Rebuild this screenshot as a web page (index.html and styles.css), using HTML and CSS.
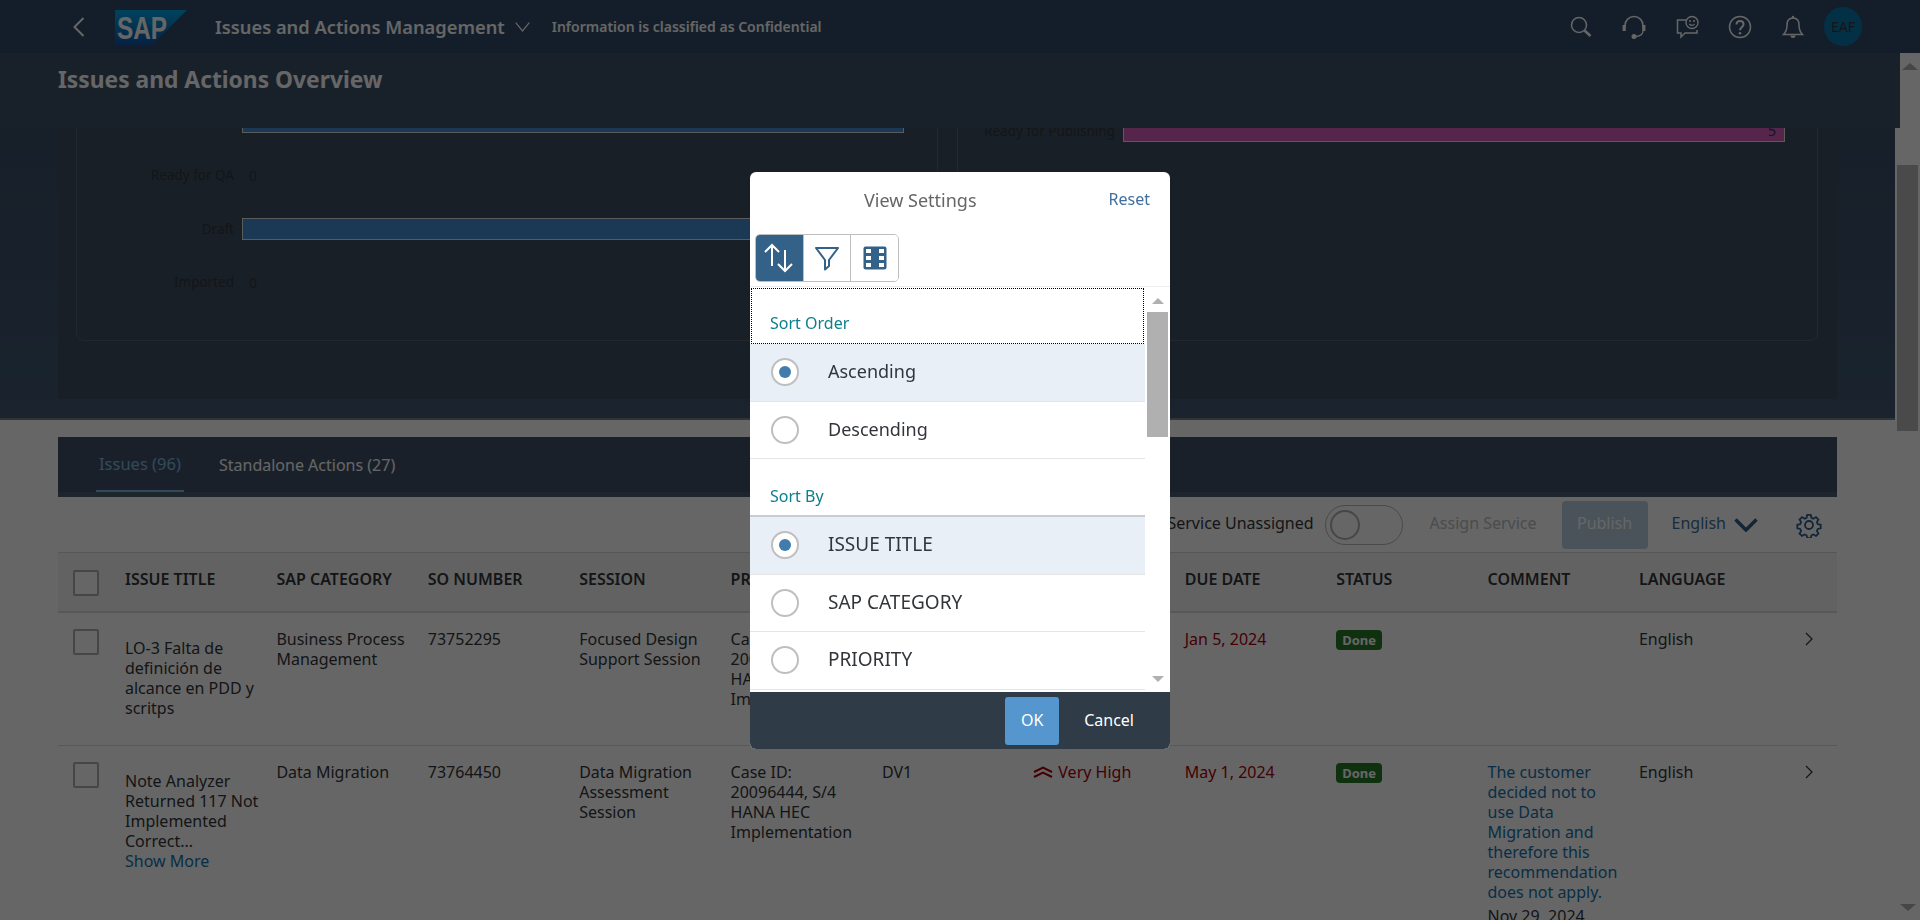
FILE: index.html
```html
<!DOCTYPE html>
<html lang="en">
<head>
<meta charset="utf-8">
<title>Issues and Actions Overview</title>
<link rel="stylesheet" href="styles.css">
</head>
<body>
<div class="app">
  <header class="shell">
    <svg class="ic-back" viewBox="0 0 14 20" width="14" height="20"><path d="M11.5 1 2.5 10l9 9" fill="none" stroke="#fff" stroke-width="2"/></svg>
    <svg class="logo" viewBox="0 0 72 36" width="72" height="36">
      <defs><linearGradient id="sapg" x1="0" y1="0" x2="0" y2="1"><stop offset="0" stop-color="#00a8e8"/><stop offset="1" stop-color="#1150a8"/></linearGradient></defs>
      <polygon points="0,0 72,0 36,36 0,36" fill="url(#sapg)"/>
      <text x="2" y="29" class="logo-text" textLength="50" lengthAdjust="spacingAndGlyphs">SAP</text>
    </svg>
    <span class="app-title">Issues and Actions Management</span>
    <svg class="ic-caret" viewBox="0 0 15 10" width="15" height="10"><path d="M.7.7 7.500 9l6.800-8.300" fill="none" stroke="#fff" stroke-width="1.200"/></svg>
    <span class="classified">Information is classified as Confidential</span>
    <div class="shell-actions">
      <svg viewBox="0 0 24 24" width="24" height="24"><circle cx="10" cy="10" r="7.500" fill="none" stroke="#fff" stroke-width="1.500"/><path d="M15.500 15.500 21.500 21" stroke="#fff" stroke-width="2.600"/></svg>
      <svg viewBox="0 0 24 24" width="24" height="24"><path d="M3 12V10.500a9 9 0 0 1 18 0V12" fill="none" stroke="#fff" stroke-width="1.500"/><path d="M2.200 10v6M21.800 10v6" stroke="#fff" stroke-width="3.200"/><path d="M21 16c0 3-2.500 5-7 5.500" fill="none" stroke="#fff" stroke-width="1.300"/><circle cx="12" cy="21.500" r="2.500" fill="#fff"/></svg>
      <svg viewBox="0 0 24 24" width="24" height="24"><path d="M11 5H2.500v13h3.500v4l4-4h12v-3" fill="none" stroke="#fff" stroke-width="1.500"/><circle cx="17" cy="7.500" r="6" fill="none" stroke="#fff" stroke-width="1.400"/><circle cx="15" cy="6" r="1" fill="#fff"/><circle cx="19" cy="6" r="1" fill="#fff"/><path d="M14.300 9c1.500 1.800 4 1.800 5.400 0" fill="none" stroke="#fff" stroke-width="1.200"/></svg>
      <svg viewBox="0 0 24 24" width="24" height="24"><circle cx="12" cy="12" r="10.500" fill="none" stroke="#fff" stroke-width="1.500"/><path d="M8.500 9.500C8.500 7 10 6 12 6s3.500 1.200 3.500 3.200c0 3-3.500 3-3.500 6" fill="none" stroke="#fff" stroke-width="2"/><circle cx="12" cy="18.300" r="1.300" fill="#fff"/></svg>
      <svg viewBox="0 0 24 24" width="24" height="24"><path d="M12 3c-4 0-6 3-6 7 0 5-1 7-3.500 9.500h19C19 17 18 15 18 10c0-4-2-7-6-7Z" fill="none" stroke="#fff" stroke-width="1.500"/><circle cx="12" cy="2" r="1.200" fill="#fff"/><path d="M9.500 20.500a2.500 2.500 0 0 0 5 0Z" fill="#fff"/></svg>
      <span class="avatar">EAF</span>
    </div>
  </header>
  <div class="workspace">
    <main class="main">
      <div class="title-bar"><h1 class="page-title">Issues and Actions Overview</h1></div>
      <section class="band">
        <div class="panel">
          <div class="card">
            <div class="chart-row"><span class="chart-label">In Review</span><div class="bar bar-blue bar-full"></div></div>
            <div class="chart-row"><span class="chart-label">Ready for QA</span><span class="chart-zero">0</span></div>
            <div class="chart-row"><span class="chart-label">Draft</span><div class="bar bar-blue bar-draft"></div></div>
            <div class="chart-row"><span class="chart-label">Imported</span><span class="chart-zero">0</span></div>
          </div>
          <div class="card card-right">
            <div class="chart-row"><span class="chart-label">Ready for Publishing</span><div class="bar bar-pink bar-full"><span class="bar-value">5</span></div></div>
          </div>
        </div>
      </section>
      <section class="issues">
        <nav class="tabs">
          <span class="tab tab-active">Issues (96)</span>
          <span class="tab">Standalone Actions (27)</span>
        </nav>
        <div class="toolbar">
          <span class="tool-text">Service Unassigned</span>
          <span class="toggle"><span class="knob"></span></span>
          <span class="assign">Assign Service</span>
          <span class="publish">Publish</span>
          <span class="lang">English</span>
          <svg class="lang-caret" viewBox="0 0 24 14" width="24" height="14"><path d="M1.500 1.500 12 12 22.500 1.500" fill="none" stroke="#2f5f8a" stroke-width="3.500"/></svg>
          <svg class="gear" viewBox="0 0 26 26" width="26" height="26"><circle cx="13" cy="13" r="4" fill="none" stroke="#2f5f8a" stroke-width="1.800"/><path d="M11 1.500h4l.7 3.300 2.300 1 2.900-1.800 2.800 2.800-1.800 2.900 1 2.300 3.300.7v4l-3.300.7-1 2.300 1.800 2.900-2.800 2.800-2.900-1.800-2.300 1-.7 3.300h-4l-.7-3.300-2.300-1-2.900 1.800-2.800-2.800 1.800-2.900-1-2.300-3.300-.7v-4l3.300-.7 1-2.300-1.800-2.900 2.800-2.800 2.900 1.800 2.300-1Z" transform="translate(1.500 1.500) scale(.885)" fill="none" stroke="#2f5f8a" stroke-width="2"/></svg>
        </div>
        <div class="grid grid-head">
          <span class="check-cell"><span class="check"></span></span>
          <span class="cell">ISSUE TITLE</span>
          <span class="cell">SAP CATEGORY</span>
          <span class="cell">SO NUMBER</span>
          <span class="cell">SESSION</span>
          <span class="cell">PROJECT</span>
          <span class="cell">PHASE</span>
          <span class="cell">PRIORITY</span>
          <span class="cell">DUE DATE</span>
          <span class="cell">STATUS</span>
          <span class="cell">COMMENT</span>
          <span class="cell">LANGUAGE</span>
        </div>
        <div class="grid grid-row row-one">
          <span class="check-cell"><span class="check"></span></span>
          <span class="cell cell-title">LO-3 Falta de definición de alcance en PDD y scritps</span>
          <span class="cell">Business Process Management</span>
          <span class="cell">73752295</span>
          <span class="cell">Focused Design Support Session</span>
          <span class="cell">Case ID: 20096444, S/4 HANA HEC Implementation</span>
          <span class="cell">DV1</span>
          <span class="cell prio"></span>
          <span class="cell due">Jan 5, 2024</span>
          <span class="cell"><span class="badge">Done</span></span>
          <span class="cell"></span>
          <span class="cell">English</span>
          <svg class="row-nav" viewBox="0 0 8 14" width="8" height="14"><path d="m1 1 6 6-6 6" fill="none" stroke="#333" stroke-width="1.200"/></svg>
        </div>
        <div class="grid grid-row">
          <span class="check-cell"><span class="check"></span></span>
          <span class="cell cell-title">Note Analyzer Returned 117 Not Implemented Correct...<a class="more">Show More</a></span>
          <span class="cell">Data Migration</span>
          <span class="cell">73764450</span>
          <span class="cell">Data Migration Assessment Session</span>
          <span class="cell">Case ID: 20096444, S/4 HANA HEC Implementation</span>
          <span class="cell">DV1</span>
          <span class="cell prio"><svg viewBox="0 0 20 12" width="20" height="12"><path d="M1 6 10 1.500 19 6M1 11 10 6.500 19 11" fill="none" stroke="#a80008" stroke-width="2"/></svg>Very High</span>
          <span class="cell due">May 1, 2024</span>
          <span class="cell"><span class="badge">Done</span></span>
          <span class="cell comment">The customer decided not to use Data Migration and therefore this recommendation does not apply.<span class="comment-date">Nov 29, 2024</span></span>
          <span class="cell">English</span>
          <svg class="row-nav" viewBox="0 0 8 14" width="8" height="14"><path d="m1 1 6 6-6 6" fill="none" stroke="#333" stroke-width="1.200"/></svg>
        </div>
      </section>
    </main>
    <div class="page-scroll">
      <span class="arrow-up"></span>
      <span class="page-thumb"></span>
      <span class="arrow-down"></span>
    </div>
  </div>
</div>

<div class="overlay"></div>

<div class="dialog" role="dialog">
  <div class="dlg-head">
    <span class="dlg-title">View Settings</span>
    <a class="reset">Reset</a>
  </div>
  <div class="seg-row">
    <div class="seg">
      <span class="seg-btn seg-on"><svg viewBox="0 0 32 32" width="32" height="32"><path d="M9 24V3M2 10l7-7 7 7M22 8v21M15 22l7 7 7-7" fill="none" stroke="#fff" stroke-width="2"/></svg></span>
      <span class="seg-btn"><svg viewBox="0 0 26 26" width="26" height="26"><path d="M2 3h22l-9 12v6l-4 3.500V15Z" fill="none" stroke="#346187" stroke-width="2" stroke-linejoin="round"/></svg></span>
      <span class="seg-btn"><svg viewBox="0 0 24 24" width="24" height="24"><rect x=".5" y=".5" width="23" height="23" rx="2" fill="#346187"/><path d="M3 3h5v4H3zM3 10h5v4H3zM3 17h5v4H3zM16 3h5v4h-5zM16 10h5v4h-5zM16 17h5v4h-5z" fill="#fff"/></svg></span>
    </div>
  </div>
  <div class="dlg-scroll">
    <div class="dlg-list">
      <div class="group group-focus">Sort Order</div>
      <div class="opt opt-on"><span class="radio"></span><span class="opt-text">Ascending</span></div>
      <div class="opt"><span class="radio"></span><span class="opt-text">Descending</span></div>
      <div class="group group-line">Sort By</div>
      <div class="opt opt-on"><span class="radio"></span><span class="opt-text opt-caps">ISSUE TITLE</span></div>
      <div class="opt"><span class="radio"></span><span class="opt-text opt-caps">SAP CATEGORY</span></div>
      <div class="opt"><span class="radio"></span><span class="opt-text opt-caps">PRIORITY</span></div>
    </div>
    <div class="dlg-bar">
      <span class="dlg-up"></span>
      <span class="dlg-thumb"></span>
      <span class="dlg-down"></span>
    </div>
  </div>
  <div class="dlg-foot">
    <span class="btn-ok">OK</span>
    <span class="btn-cancel">Cancel</span>
  </div>
</div>
</body>
</html>
```

FILE: styles.css
```css
* { box-sizing: border-box; }
html, body { margin: 0; height: 920px; overflow: hidden; background: #fff; }
body { font-family: "Noto Sans", "Open Sans", sans-serif; color: #32363a; font-size: 16px; }

.app { height: 920px; display: flex; flex-direction: column; overflow: hidden; }

/* shell */
.shell { height: 53px; flex: none; background: #324b69; display: flex; align-items: center; color: #fff; position: relative; z-index: 2; }
.ic-back { margin-left: 72px; }
.logo { margin: 3px 0 0 29px; flex: none; }
.logo-text { font-family: "Liberation Sans", sans-serif; font-weight: 700; font-size: 31px; fill: #fff; }
.app-title { margin-left: 28px; font-size: 18.300px; font-weight: 600; white-space: nowrap; }
.ic-caret { margin-left: 10px; }
.classified { margin-left: 22px; font-size: 14px; font-weight: 600; white-space: nowrap; }
.shell-actions { margin-left: auto; margin-right: 58px; display: flex; align-items: center; gap: 29px; }
.avatar { width: 38px; height: 39px; border-radius: 50%; background: #0a78ac; color: #32363a; font-size: 14px; display: flex; align-items: center; justify-content: center; margin-left: -10px; }

/* workspace */
.workspace { flex: 1; display: flex; min-height: 0; }
.main { width: 1895px; flex: none; }
.page-scroll { width: 25px; flex: none; display: flex; flex-direction: column; align-items: center; background: #fff; padding: 10px 0 9px 0; }
.arrow-up { width: 0; height: 0; border-left: 8px solid transparent; border-right: 8px solid transparent; border-bottom: 7px solid #b0b0b0; margin-left: 5px; }
.page-thumb { width: 21px; height: 266px; background: #b8b8b8; margin-top: 95px; }
.arrow-down { margin-top: auto; width: 0; height: 0; border-left: 8px solid transparent; border-right: 8px solid transparent; border-top: 7px solid #b0b0b0; }

.title-bar { height: 75px; margin-right: -5px; position: relative; background: #3e5269; display: flex; align-items: center; padding: 0 0 21px 58px; z-index: 1; }
.page-title { margin: 0; color: #fff; font-size: 22.800px; font-weight: 700; line-height: 1; }

.band { height: 292px; padding: 0 58px; background: linear-gradient(#3a4e68, #425a72); border-bottom: 2px solid #7a7f88; }
.panel { height: 271px; background: #3e4e62; padding: 0 19px 0 18px; display: grid; grid-template-columns: 862px 861px; column-gap: 19px; overflow: hidden; align-items: start; }
.card { height: 246px; margin-top: -33px; border: 1px solid #5a6473; border-top: 0; border-radius: 0 0 8px 8px; }
.card-right { padding-top: 9px; }
.chart-row { height: 53.500px; display: flex; align-items: center; gap: 8px; }
.chart-label { width: 157px; text-align: right; font-size: 13.500px; white-space: nowrap; flex: none; }
.chart-zero { font-size: 14px; margin-left: 7px; }
.bar { height: 22px; border: 1px solid #e4e4e4; position: relative; }
.bar-full { width: 662px; }
.bar-draft { width: 520px; }
.bar-blue { background: #448cd4; border-width: 1.500px; }
.bar-pink { background: #d55cbc; display: flex; align-items: center; justify-content: flex-end; padding-right: 8px; font-size: 14px; }

/* issues */
.issues { margin: 17px 58px 0; }
.tabs { height: 60px; background: linear-gradient(#415269 55px, #46606f 55px); display: flex; gap: 32px; padding: 0 38px 5px; color: #fff; font-size: 16px; }
.tab { display: flex; align-items: center; height: 55px; padding: 0 3px; position: relative; }
.tab-active { color: #7eb8e0; border-bottom: 2px solid #7eb8e0; width: 88px; flex: none; font-size: 16.500px; white-space: nowrap; }
.toolbar { height: 56px; display: flex; align-items: center; border-bottom: 1px solid #d9d9d9; padding-right: 15px; }
.tool-text { margin-left: auto; font-size: 16px; white-space: nowrap; padding-bottom: 3px; }
.toggle { width: 78px; height: 40px; margin-left: 11px; border: 1px solid #b8b8b8; border-radius: 20px; padding: 4px 4px; display: flex; }
.knob { width: 30px; height: 30px; border-radius: 50%; border: 2px solid #b0b0b0; background: #fff; }
.assign { margin-left: 27px; color: #b8bec4; font-size: 16px; white-space: nowrap; padding-bottom: 3px; }
.publish { margin-left: 25px; width: 86px; height: 48px; border-radius: 4px; background: #b9cfe0; color: #fff; display: flex; align-items: center; justify-content: center; font-size: 16px; padding-bottom: 3px; }
.lang { margin-left: 24px; color: #3d6f9a; font-size: 16px; padding-bottom: 3px; }
.lang-caret { margin-left: 8px; }
.gear { margin-left: 38px; }

.grid { display: grid; grid-template-columns: 59px repeat(11, 151.400px) 1fr; position: relative; }
.grid-head { height: 60px; background: #f6f6f6; border-bottom: 2px solid #dcdcdc; font-weight: 600; font-size: 16px; align-items: start; padding-top: 16px; color: #32363a; }
.grid-row { border-bottom: 1px solid #dcdcdc; padding-top: 16px; line-height: 20px; font-size: 16px; align-items: start; }
.row-one { height: 133px; }
.cell { padding-left: 8px; padding-right: 8px; display: block; }
.grid-head .cell { line-height: 20px; white-space: nowrap; overflow: hidden; }
.check-cell { display: block; padding: 0 0 0 15px; }
.grid-head .check-cell { padding-top: 1px; }
.check { display: block; width: 26px; height: 26px; border: 2px solid #b0b0b0; border-radius: 2px; background: #fff; }
.cell-title { padding-top: 9px; padding-right: 4px; }
.more { display: block; color: #1574b0; }
.prio { color: #a80008; display: flex; align-items: center; gap: 5px; white-space: nowrap; }
.due { color: #ad0008; }
.badge { display: inline-block; width: 46px; height: 20px; line-height: 20px; text-align: center; border-radius: 4px; background: #2a7b2a; color: #fff; font-size: 13px; font-weight: 700; vertical-align: top; margin-top: 1px; }
.comment { color: #1574b0; padding-right: 16px; }
.comment-date { display: block; margin-top: 4px; color: #32363a; }
.row-nav { position: absolute; left: 1747px; top: 19px; }

/* overlay */
.overlay { position: fixed; inset: 0; background: rgba(0, 0, 0, .6); z-index: 10; }

/* dialog */
.dialog { position: fixed; left: 750px; top: 172px; width: 420px; height: 577px; background: #fff; border-radius: 6px; z-index: 11; display: flex; flex-direction: column; overflow: hidden; }
.dlg-head { height: 56px; flex: none; display: flex; align-items: center; padding: 0 20px 0 114px; }
.dlg-title { font-size: 18px; color: #666; }
.reset { margin-left: auto; color: #3f6f9f; font-size: 16px; margin-top: -2px; }
.seg-row { height: 59px; flex: none; padding: 6px 5px 0; border-bottom: 1px solid #ededed; }
.seg { display: flex; width: 144px; height: 48px; border: 1px solid #bfbfbf; border-radius: 5px; overflow: hidden; }
.seg-btn { flex: 1; display: flex; align-items: center; justify-content: center; background: #fff; border-left: 1px solid #bfbfbf; }
.seg-btn:first-child { border-left: 0; }
.seg-on { background: #346187; }
.dlg-scroll { flex: 1; min-height: 0; display: flex; overflow: hidden; }
.dlg-list { width: 395px; flex: none; }
.group { height: 58px; padding: 0 20px 8px; display: flex; align-items: flex-end; font-size: 16px; color: #0b7f8c; }
.group-focus { height: 56px; margin: 1px 1px 0; outline: 1px dotted #000; outline-offset: -1px; padding: 0 19px 10px; }
.group-line { border-bottom: 2px solid #c9ccd1; }
.opt { height: 57.500px; display: flex; align-items: center; padding-left: 21px; font-size: 18px; border-bottom: 1px solid #e5e5e5; color: #32363a; }
.opt-on { background: #e8eff7; }
.opt-text { margin-bottom: 2px; }
.opt-caps { font-size: 19px; }
.radio { width: 28px; height: 28px; border-radius: 50%; border: 2px solid #bfbfbf; background: #fff; margin-right: 29px; flex: none; display: flex; align-items: center; justify-content: center; }
.opt-on .radio::after { content: ""; width: 12px; height: 12px; border-radius: 50%; background: #427cac; }
.dlg-bar { flex: 1; padding: 11px 2px 0; display: flex; flex-direction: column; align-items: center; }
.dlg-up { width: 0; height: 0; border-left: 6px solid transparent; border-right: 6px solid transparent; border-bottom: 6px solid #b0b0b0; }
.dlg-thumb { width: 21px; height: 125px; background: #b0b0b0; margin-top: 8px; }
.dlg-down { margin-top: 239px; width: 0; height: 0; border-left: 6px solid transparent; border-right: 6px solid transparent; border-top: 6px solid #b0b0b0; }
.dlg-foot { height: 57px; flex: none; background: #2f3c48; display: flex; align-items: center; justify-content: flex-end; padding: 0 36px 0 0; }
.btn-ok { width: 54px; height: 48px; border-radius: 3px; background: #5496cd; color: #fff; display: flex; align-items: center; justify-content: center; font-size: 16px; margin-top: 1px; padding-bottom: 2px; }
.btn-cancel { color: #fff; margin-left: 25px; font-size: 16px; margin-bottom: 1px; }
```
